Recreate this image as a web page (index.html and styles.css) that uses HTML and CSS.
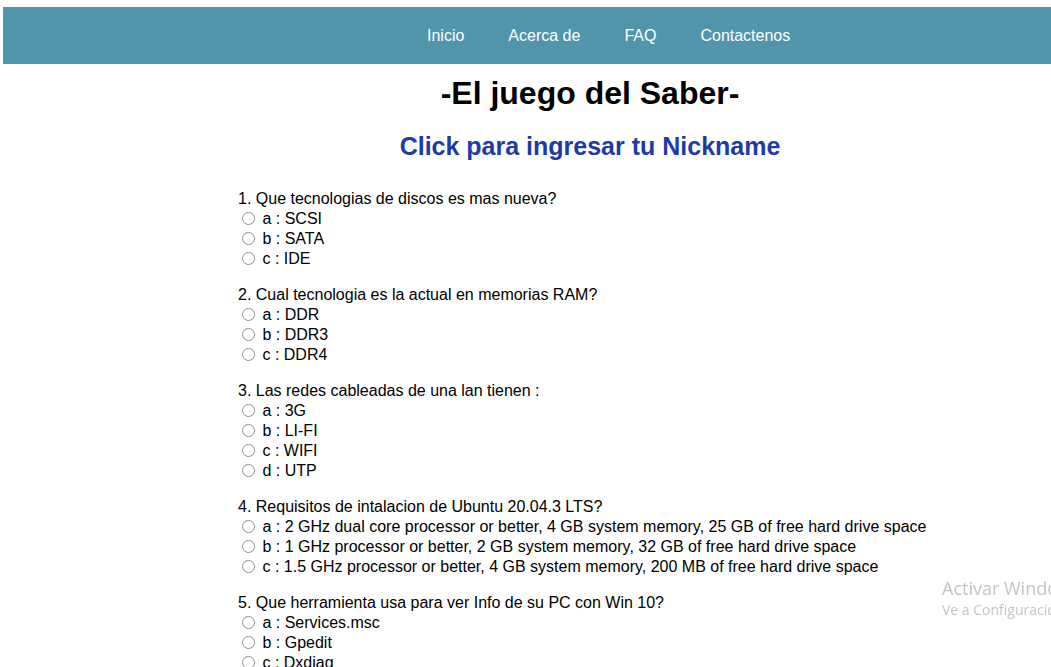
FILE: index.html
```html
<!DOCTYPE html>
<html lang="es">
<head>
<meta charset="utf-8">
<title>El juego del Saber</title>
<link rel="stylesheet" href="styles.css">
</head>
<body>
<nav class="topnav">
  <ul class="nav-list">
    <li><a class="nav-link" href="#">Inicio</a></li>
    <li><a class="nav-link" href="#">Acerca de</a></li>
    <li><a class="nav-link" href="#">FAQ</a></li>
    <li><a class="nav-link" href="#">Contactenos</a></li>
  </ul>
</nav>
<main class="content">
  <h1 class="title">-El juego del Saber-</h1>
  <h2 class="nick">Click para ingresar tu Nickname</h2>
  <form class="quiz">
    <div class="question">
      <div class="q-text">1. Que tecnologias de discos es mas nueva?</div>
      <label class="opt"><input type="radio" name="q1"> a : SCSI</label>
      <label class="opt"><input type="radio" name="q1"> b : SATA</label>
      <label class="opt"><input type="radio" name="q1"> c : IDE</label>
    </div>
    <div class="question">
      <div class="q-text">2. Cual tecnologia es la actual en memorias RAM?</div>
      <label class="opt"><input type="radio" name="q2"> a : DDR</label>
      <label class="opt"><input type="radio" name="q2"> b : DDR3</label>
      <label class="opt"><input type="radio" name="q2"> c : DDR4</label>
    </div>
    <div class="question">
      <div class="q-text">3. Las redes cableadas de una lan tienen :</div>
      <label class="opt"><input type="radio" name="q3"> a : 3G</label>
      <label class="opt"><input type="radio" name="q3"> b : LI-FI</label>
      <label class="opt"><input type="radio" name="q3"> c : WIFI</label>
      <label class="opt"><input type="radio" name="q3"> d : UTP</label>
    </div>
    <div class="question">
      <div class="q-text">4. Requisitos de intalacion de Ubuntu 20.04.3 LTS?</div>
      <label class="opt"><input type="radio" name="q4"> a : 2 GHz dual core processor or better, 4 GB system memory, 25 GB of free hard drive space</label>
      <label class="opt"><input type="radio" name="q4"> b : 1 GHz processor or better, 2 GB system memory, 32 GB of free hard drive space</label>
      <label class="opt"><input type="radio" name="q4"> c : 1.5 GHz processor or better, 4 GB system memory, 200 MB of free hard drive space</label>
    </div>
    <div class="question">
      <div class="q-text">5. Que herramienta usa para ver Info de su PC con Win 10?</div>
      <label class="opt"><input type="radio" name="q5"> a : Services.msc</label>
      <label class="opt"><input type="radio" name="q5"> b : Gpedit</label>
      <label class="opt"><input type="radio" name="q5"> c : Dxdiag</label>
    </div>
  </form>
</main>
<div class="watermark">
  <div class="wm-title">Activar Windows</div>
  <div class="wm-sub">Ve a Configuración para activar Windows.</div>
</div>
</body>
</html>
```

FILE: styles.css
```css
html {
  overflow: hidden;
}
body {
  margin: 0;
  font-family: "Liberation Sans", Arial, sans-serif;
  color: #000;
  background: #fff;
  overflow: hidden;
}
.topnav {
  margin: 7px 0 0 3px;
  height: 57px;
  background: #5095ab;
  display: flex;
  align-items: center;
}
.nav-list {
  list-style: none;
  margin: 0;
  padding: 0 0 0 402px;
  display: flex;
}
.nav-link {
  display: block;
  padding: 0 22px;
  color: #fff;
  text-decoration: none;
  font-size: 16px;
  line-height: 20px;
}
.content {
  margin-left: 129px;
}
.title {
  margin: 10px 0 0;
  font-size: 32px;
  line-height: 38px;
  font-weight: bold;
  text-align: center;
}
.nick {
  margin: 20px 0 0;
  font-size: 25px;
  line-height: 28px;
  font-weight: bold;
  color: #1d3aa6;
  text-align: center;
}
.quiz {
  margin: 29px 0 0 109px;
}
.question {
  margin-bottom: 16px;
}
.q-text,
.opt {
  display: block;
  font-size: 16px;
  line-height: 20px;
  white-space: nowrap;
}
.opt input {
  appearance: none;
  -webkit-appearance: none;
  width: 13px;
  height: 13px;
  margin: 0 3px 0 4px;
  border: 1px solid #8d8d8d;
  border-radius: 50%;
  background: #fff;
  vertical-align: -1px;
  box-sizing: border-box;
}
.watermark {
  position: fixed;
  left: 942px;
  top: 577px;
  font-family: "Open Sans", "Noto Sans", sans-serif;
  color: #c4c4c4;
  white-space: nowrap;
}
.wm-title {
  font-size: 18px;
  line-height: 22px;
}
.wm-sub {
  font-size: 14px;
  line-height: 22px;
}
```
